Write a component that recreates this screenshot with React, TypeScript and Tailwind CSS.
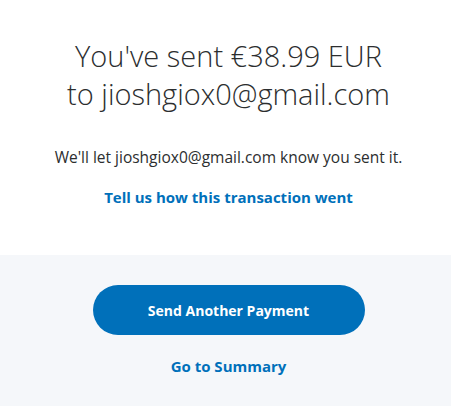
import React from "react";

const font = { fontFamily: '"Open Sans", "Liberation Sans", sans-serif' };

export default function App() {
  return (
    <div className="w-[451px] h-[406px] flex flex-col bg-[#f5f7fa] pl-[6px]" style={font}>
      {/* confirmation message */}
      <section className="h-[255px] bg-white -ml-[6px] pl-[6px] flex flex-col items-center pt-[37px]">
        <h1 className="text-center text-[29px] leading-[38px] font-light text-[#2c2e2f]">
          You've sent €38.99 EUR
          <br />
          to jioshgiox0@gmail.com
        </h1>
        <p className="mt-[34px] text-[15.5px] leading-[20px] text-[#2c2e2f]">
          We'll let jioshgiox0@gmail.com know you sent it.
        </p>
        <a href="#" className="mt-[20px] text-[15px] leading-[20px] font-bold text-[#0070ba]">
          Tell us how this transaction went
        </a>
      </section>

      {/* actions */}
      <section className="flex flex-col items-center pt-[30px]">
        <button className="w-[272px] h-[50px] rounded-full bg-[#0070ba] text-white text-[14px] font-bold">
          Send Another Payment
        </button>
        <a href="#" className="mt-[21px] text-[15px] leading-[20px] font-bold text-[#0070ba]">
          Go to Summary
        </a>
      </section>
    </div>
  );
}
